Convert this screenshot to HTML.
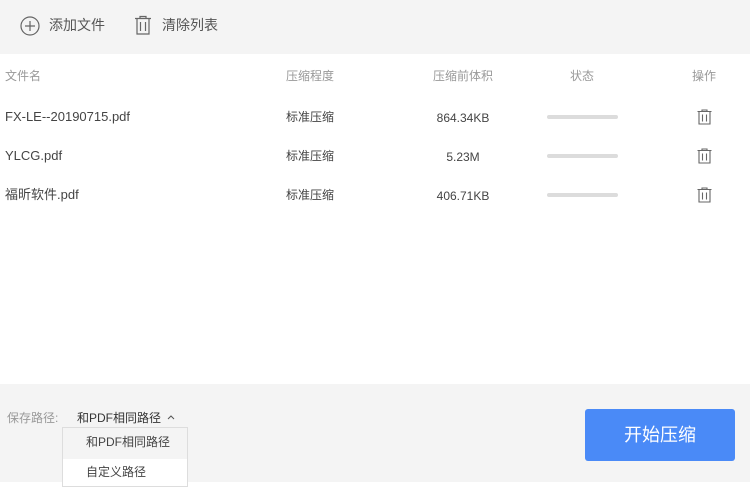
<!DOCTYPE html>
<html><head><meta charset="utf-8"><style>
*{margin:0;padding:0;box-sizing:border-box}
body{width:750px;height:482px;overflow:hidden;background:#fff;font-family:"Liberation Sans","Noto Sans CJK SC",sans-serif;position:relative;color:#444}
.top{position:absolute;left:0;top:0;width:750px;height:54px;background:#f4f4f4}
.bot{position:absolute;left:0;top:384px;width:750px;height:98px;background:#f4f4f4}
.t{position:absolute;font-size:13px;line-height:16px;white-space:nowrap}
.h{color:#999;font-size:12px}
.c{transform:translateX(-50%)}
.bar{position:absolute;left:547px;width:71px;height:4px;border-radius:2px;background:#dcdcdc}
.btn{position:absolute;left:585px;top:409px;width:150px;height:52px;background:#4a8af7;border-radius:3px;color:#fff;font-size:18px;text-align:center;line-height:52px}
.dd{position:absolute;left:62px;top:427px;width:126px;height:60px;background:#fff;border:1px solid #ddd}
.dd .a{height:31px;background:#f4f4f4}
</style></head><body>
<div class="top"></div>
<svg style="position:absolute;left:20px;top:16px" width="20" height="20" viewBox="0 0 20 20"><circle cx="10" cy="10" r="9" fill="none" stroke="#666" stroke-width="1.2"/><path d="M10 5v10M5 10h10" stroke="#666" stroke-width="1.2"/></svg>
<div class="t" style="left:49px;top:17px;font-size:14px;color:#555">添加文件</div>
<svg style="position:absolute;left:134px;top:15px" width="18" height="20" viewBox="0 0 18 20"><path d="M1 3.5h16M3 3.5V19h12V3.5M6.5 7v9M11.5 7v9M6 3.5V1.5h6v2" fill="none" stroke="#666" stroke-width="1.2"/></svg>
<div class="t" style="left:162px;top:17px;font-size:14px;color:#555">清除列表</div>

<div class="t h" style="left:5px;top:68px">文件名</div>
<div class="t h" style="left:286px;top:68px">压缩程度</div>
<div class="t h c" style="left:463px;top:68px">压缩前体积</div>
<div class="t h c" style="left:582px;top:68px">状态</div>
<div class="t h c" style="left:704px;top:68px">操作</div>

<div class="t" style="left:5px;top:109px">FX-LE--20190715.pdf</div>
<div class="t" style="left:286px;top:109px;font-size:12px">标准压缩</div>
<div class="t c" style="left:463px;top:110px;font-size:12px">864.34KB</div>
<div class="bar" style="top:115px"></div>
<div class="t" style="left:5px;top:148px">YLCG.pdf</div>
<div class="t" style="left:286px;top:148px;font-size:12px">标准压缩</div>
<div class="t c" style="left:463px;top:149px;font-size:12px">5.23M</div>
<div class="bar" style="top:154px"></div>
<div class="t" style="left:5px;top:187px">福昕软件.pdf</div>
<div class="t" style="left:286px;top:187px;font-size:12px">标准压缩</div>
<div class="t c" style="left:463px;top:188px;font-size:12px">406.71KB</div>
<div class="bar" style="top:193px"></div>
<svg style="position:absolute;left:697px;top:109px" width="15" height="16" viewBox="0 0 15 16"><path d="M0.5 2.5h14M2 2.5V15h11V2.5M5.5 5.5v7M9.5 5.5v7M5 2.5V1h5v1.5" fill="none" stroke="#666" stroke-width="1.1"/></svg>
<svg style="position:absolute;left:697px;top:148px" width="15" height="16" viewBox="0 0 15 16"><path d="M0.5 2.5h14M2 2.5V15h11V2.5M5.5 5.5v7M9.5 5.5v7M5 2.5V1h5v1.5" fill="none" stroke="#666" stroke-width="1.1"/></svg>
<svg style="position:absolute;left:697px;top:187px" width="15" height="16" viewBox="0 0 15 16"><path d="M0.5 2.5h14M2 2.5V15h11V2.5M5.5 5.5v7M9.5 5.5v7M5 2.5V1h5v1.5" fill="none" stroke="#666" stroke-width="1.1"/></svg>

<div class="bot"></div>
<div class="t" style="left:7px;top:410px;font-size:12px;color:#999">保存路径:</div>
<div class="t" style="left:77px;top:410px;font-size:12px;color:#333">和PDF相同路径</div>
<svg style="position:absolute;left:167px;top:414px" width="8" height="6" viewBox="0 0 8 6"><path d="M1 5l3-3 3 3" fill="none" stroke="#555" stroke-width="1"/></svg>
<div class="dd"><div class="a"></div></div>
<div class="t" style="left:86px;top:434px;font-size:12px">和PDF相同路径</div>
<div class="t" style="left:86px;top:464px;font-size:12px">自定义路径</div>
<div class="btn">开始压缩</div>
</body></html>
